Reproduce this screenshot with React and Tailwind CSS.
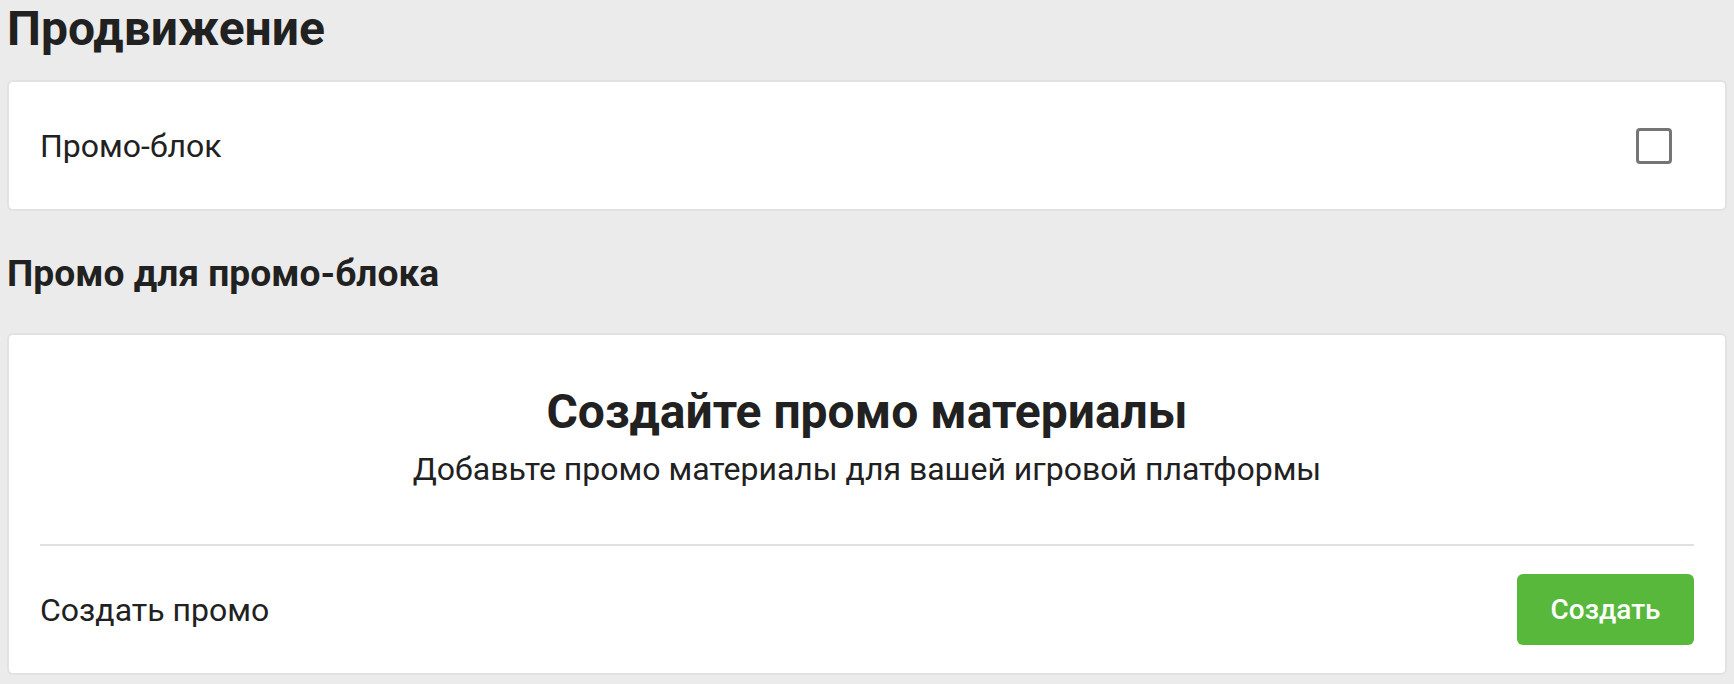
export default function App() {
  return (
    <div className="min-h-screen bg-[#ebebeb] px-[7px] font-['Roboto',sans-serif] text-[#212121]">
      <h1 className="text-[48px] font-bold leading-[normal]">Продвижение</h1>

      {/* Promo block toggle */}
      <div className="mt-[23px] flex h-[131px] items-center justify-between rounded-md border-2 border-[#e2e2e2] bg-white pl-[31px] pr-[53px]">
        <span className="text-[32px] leading-[normal]">Промо-блок</span>
        <div className="h-[36px] w-[36px] rounded-[4px] border-[3px] border-[#757575] bg-white"></div>
      </div>

      <h2 className="mt-[40px] text-[37.2px] font-bold leading-[normal]">Промо для промо-блока</h2>

      {/* Empty state card */}
      <div className="mt-[38px] rounded-md border-2 border-[#e2e2e2] bg-white px-[31px]">
        <div className="flex flex-col items-center pt-[48px] pb-[56px]">
          <h3 className="text-[48px] font-bold leading-[normal]">Создайте промо материалы</h3>
          <p className="mt-[10px] text-[32px] leading-[normal]">
            Добавьте промо материалы для вашей игровой платформы
          </p>
        </div>
        <div className="h-[2px] bg-[#e0e0e0]"></div>
        <div className="flex items-center justify-between pt-[28px] pb-[28px]">
          <span className="text-[32px] leading-[normal]">Создать промо</span>
          <button className="flex h-[71px] w-[177px] items-center justify-center rounded-md bg-[#58b83b] text-[28px] font-medium text-white">
            Создать
          </button>
        </div>
      </div>
    </div>
  );
}
